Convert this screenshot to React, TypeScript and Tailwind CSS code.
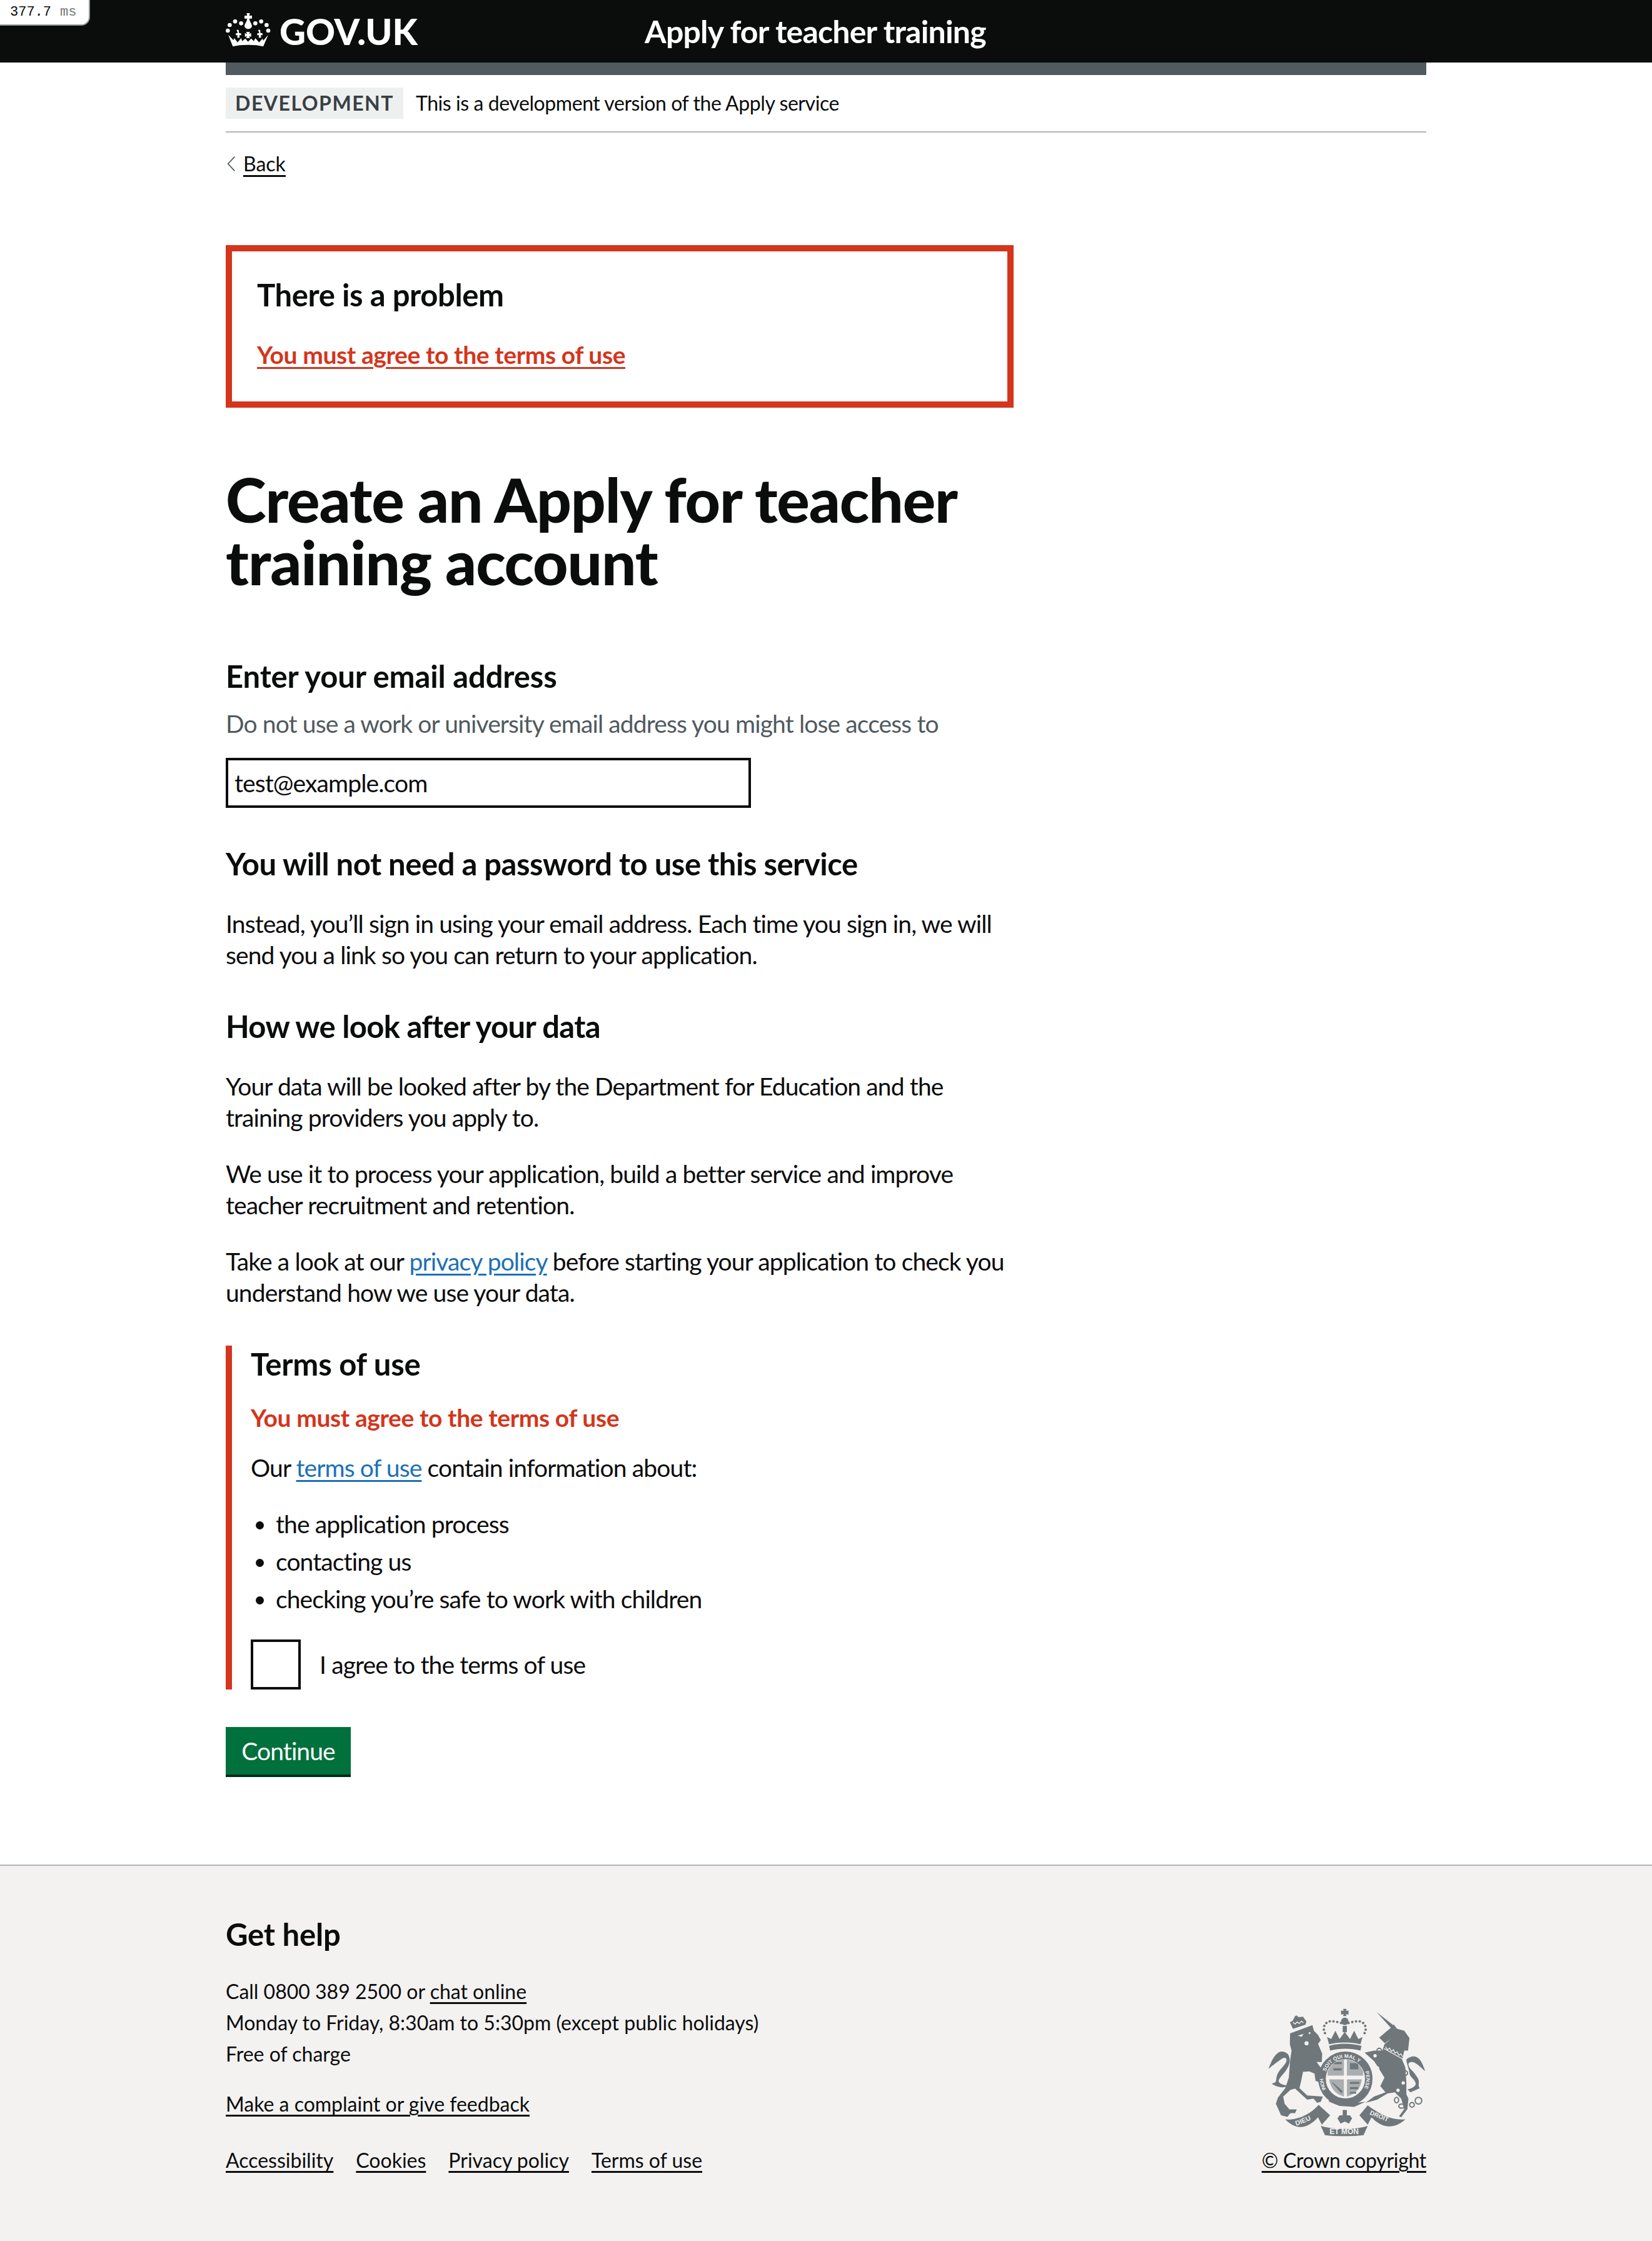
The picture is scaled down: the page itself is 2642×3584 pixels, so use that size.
const fontStack = "font-['Lato',sans-serif]";
const bold = "pb-[2px] text-[49px] font-bold leading-[58px]";

function CrownLogo() {
  return (
    <svg viewBox="0 0 270 210" className="ml-[-6px] h-[70px] w-[90px] shrink-0" fill="#ffffff">
      {[[28, 102], [37, 75], [63, 58], [92, 67], [222, 102], [214, 75], [188, 58], [160, 67]].map(([cx, cy]) => (
        <circle key={cx} cx={cx} cy={cy} r="10" />
      ))}
      <path d="M118 18h16l-3 12h13v14h-13l3 12c6 12 12 20 9 28-3 7-11 10-17 10s-14-3-17-10c-3-8 3-16 9-28l3-12h-13V30h13z" />
      <path d="M70 98h10l2 16h9l1 10h-9l2 12h-12l2-12h-9l1-10h9z" />
      <path d="M173 98h10l2 16h9l1 10h-9l2 12h-12l2-12h-9l1-10h9z" />
      <path d="M116 108h18l-4 10 10-4v18l-10-4 4 10h-18l4-10-10 4v-18l10 4z" />
      <path d="M30 122l25 26 4-10 16 20 17-20 5 14 15-12 13 15 15-15 13 12 7-14 18 20 17-18 3 10 24-28-24 56c-38-10-108-10-146 0z" />
    </svg>
  );
}

function RoyalArms() {
  return (
    <svg viewBox="130 85 760 620" className="h-[207px] w-[254px]" fill="#6f777b">
      {/* lion */}
      <path d="M238 208L345 168 352 195 372 215 385 240 372 258 392 305 390 345 365 345 395 385 410 440 385 445 360 435 355 400 330 390 300 392 290 440 283 470 320 505 395 510 385 535 368 540 350 520 320 525 262 472 240 478 205 510 212 545 235 572 270 572 262 590 240 590 225 608 195 600 170 545 180 515 215 470 232 420 238 340 245 290 237 260Z" />
      <path d="M275 218l28-8-10 14zM325 205l12-4-4 12z" fill="#f3f2f1" />
      <circle cx="317" cy="255" r="10" fill="#f3f2f1" />
      <path d="M236 345c3-30-10-50-40-50-22 0-48 40-61 83 15-15 50-40 65-50 14-8 24-2 20 14-5 18-30 35-42 60-6 14-6 30-8 36-3 6-10 8-20 10 15 12 45 22 65 17l12-8c-12 0-50-8-43-26 8-20 45-45 52-86z" />
      <path d="M252 186l-15-31 13-7 12-23 8-3 8 8 22-2 16 22-4 16z" />
      <path d="M252 155l10 8 10-10 10 8 10-12 10 8" fill="none" stroke="#f3f2f1" strokeWidth="4" />
      {/* unicorn */}
      <path d="M652 105L735 170 722 182z" />
      <path d="M725 178L735 165 750 185 785 195 810 230 803 290 785 290 775 335 790 370 795 440 795 500 805 520 800 570 770 610 760 605 785 570 770 520 740 490 705 495 655 525 600 540 640 510 695 490 670 460 690 420 660 370 640 340 595 300 640 290 680 290 690 260 722 232 692 255 665 228 700 198Z" />
      <path d="M688 280L780 332M695 272l10 14 10-8 8 16 10-8 8 16 10-6 8 16 10-6 8 14" fill="none" stroke="#f3f2f1" strokeWidth="4" />
      <path d="M795 332c10-8 25-14 35-14 28 0 42 32 55 70-15-10-40-40-60-43-10-2-20 2-20 10 0 20 25 35 30 45 8 12 20 25 20 40 0 15-5 20 5 30l-45 20-15-15c20 0 40-15 40-25 0-20-30-35-30-50 0-15-15-50-15-68z" />
      <g fill="none" stroke="#6f777b" strokeWidth="6">
        <circle cx="665" cy="290" r="11" />
        <circle cx="790" cy="398" r="11" />
        <ellipse cx="748" cy="527" rx="10" ry="13" />
        <ellipse cx="772" cy="556" rx="13" ry="10" />
        <circle cx="822" cy="550" r="11" />
        <circle cx="853" cy="530" r="16" />
      </g>
      <g fill="#f3f2f1">
        <circle cx="645" cy="315" r="8" />
        <circle cx="655" cy="375" r="10" />
        <circle cx="780" cy="445" r="8" />
        <circle cx="755" cy="480" r="8" />
      </g>
      {/* crown */}
      {[[400, 190], [402, 172], [412, 158], [428, 150], [446, 150], [464, 153], [482, 158], [518, 158], [536, 153], [554, 150], [572, 150], [588, 158], [598, 172], [600, 190], [405, 206], [595, 206]].map(([cx, cy]) => (
        <circle key={`${cx}-${cy}`} cx={cx} cy={cy} r="6" />
      ))}
      <path d="M492 90h16l-2 10 12-2v20l-12-3 2 10h-16l2-10-12 3V98l12 2z" />
      <circle cx="500" cy="150" r="18" />
      <path d="M490 172h20v30h-20z" />
      <path d="M415 225l20 10 20-40 20 40 25-35 25 35 20-40 20 40 20-10-10 35c-40-12-110-12-150 0z" />
      <path d="M425 268c40-14 110-14 155 0l-5 22c-45-12-100-12-145 0z" />
      {/* garter */}
      <circle cx="503" cy="425" r="112" fill="none" stroke="#6f777b" strokeWidth="36" />
      <defs>
        <path id="garter-top" d="M409 391A100 100 0 0 1 590 375" />
        <path id="garter-right" d="M597 391A100 100 0 0 1 553 512" />
        <path id="garter-left" d="M381 425A122 122 0 0 0 437 528" />
        <clipPath id="shield-clip">
          <circle cx="503" cy="425" r="92" />
        </clipPath>
      </defs>
      <g fill="#f3f2f1" fontFamily="Liberation Sans, sans-serif" fontWeight="700">
        <text fontSize="25"><textPath href="#garter-top">SOIT QUI MAL Y</textPath></text>
        <text fontSize="24"><textPath href="#garter-right">PENSE</textPath></text>
        <text fontSize="24"><textPath href="#garter-left">HONI</textPath></text>
      </g>
      {/* shield */}
      <g clipPath="url(#shield-clip)">
        <path d="M418 322h78v88h-78zM510 322h78v88h-78zM425 428h71v82c-40-10-65-40-71-82zM510 428h72c-5 42-30 72-72 82z" fill="#6f777b" opacity="0.55" />
        <path d="M435 345h50v10h-50zM445 375h40v10h-40zM525 350h40v30h-40zM525 440h45v10h-45zM525 465h40v10h-40zM525 488h30v8h-30zM440 440l50 45-6 10-44-50z" />
      </g>
      <path d="M420 510l15-5 30 25 60 15 75-10-55 25-70-5-50-20z" />
      {/* motto scroll */}
      <path d="M215 620C280 625 340 590 375 550L430 600 390 645 372 610C320 665 270 675 215 620z" />
      <path d="M790 620C720 625 660 590 610 552L570 600 610 645 628 610C670 655 730 675 790 620z" />
      <path d="M385 650c60 20 170 20 225 0l-20 45c-60 6-130 6-185 0z" />
      <path d="M490 575h20v25l15 0 10 15-15 25-20-10-20 10-15-25 10-15 15 0z" />
      <g fill="#f3f2f1" fontFamily="Liberation Sans, sans-serif" fontWeight="700">
        <text x="268" y="650" fontSize="32" transform="rotate(-22 268 650)">DIEU</text>
        <text x="497" y="690" textAnchor="middle" fontSize="36">ET MON</text>
        <text x="618" y="596" fontSize="30" transform="rotate(22 618 596)">DROIT</text>
      </g>
    </svg>
  );
}

export default function App() {
  return (
    <div className={`relative flex min-h-[3584px] flex-col bg-white text-[39px] leading-[50px] tracking-[-0.88px] text-[#0b0c0c] ${fontStack}`}>
      {/* profiler badge */}
      <div className="absolute left-0 top-0 flex h-[41px] w-[144px] items-center rounded-br-[14px] border-b-2 border-r-2 border-[#999999] bg-white pl-[16px] font-['Liberation_Mono',monospace] text-[22px] leading-none tracking-normal">
        377.7 <span className="ml-[14px] text-[#777777]">ms</span>
      </div>

      <header className="h-[100px] bg-[#0b0c0c]">
        <div className="mx-auto flex w-[1920px] items-center text-white">
          <div className="flex h-[100px] w-[670px] items-center gap-[2px]">
            <CrownLogo />
            <span className="text-[58px] font-black leading-none tracking-normal">GOV.UK</span>
          </div>
          <span className="text-[50px] font-bold leading-none tracking-[-0.8px]">Apply for teacher training</span>
        </div>
      </header>

      <main className="mx-auto w-[1920px]">
        <div className="h-[20px] bg-[#505a5f]" />
        <div className="flex items-center gap-[20px] border-b-2 border-[#b1b4b6] pb-[20px] pt-[20px]">
          <strong className="w-[284px] bg-[#eef0f0] py-[5px] text-center text-[32px] font-bold leading-[40px] tracking-[1.5px] text-[#383f43]">DEVELOPMENT</strong>
          <span className="text-[32px] leading-[40px] tracking-[-0.43px]">This is a development version of the Apply service</span>
        </div>

        <a className="mt-[30px] flex items-center gap-[12px] text-[32px] leading-[40px] tracking-normal">
          <svg viewBox="0 0 16 28" className="ml-[2px] h-[28px] w-[14px]" fill="none" stroke="#505a5f" strokeWidth="2">
            <path d="M14 1 2 14l12 13" />
          </svg>
          <span className="underline underline-offset-[6px]">Back</span>
        </a>

        <div className="mt-[110px] w-[1260px] border-[10px] border-[#d4351c] px-[40px] pb-[50px] pt-[40px]">
          <h2 className={`${bold} tracking-[-0.4px]`}>There is a problem</h2>
          <a className="mt-[40px] block font-bold tracking-[-0.4px] text-[#d4351c] underline underline-offset-[5px]">You must agree to the terms of use</a>
        </div>

        <h1 className="mt-[96px] w-[1260px] text-[98px] font-black leading-[100px] tracking-[-1.1px]">Create an Apply for teacher training account</h1>

        <div className="w-[1260px]">
          <label className={`mt-[104px] block ${bold} tracking-[-0.14px]`}>Enter your email address</label>
          <p className="mt-[20px] text-[#505a5f]">Do not use a work or university email address you might lose access to</p>
          <div className="mt-[30px] flex h-[80px] w-[840px] items-center border-4 border-[#0b0c0c] px-[10px]">test@example.com</div>

          <h2 className={`mt-[60px] ${bold} tracking-[-0.48px]`}>You will not need a password to use this service</h2>
          <p className="mt-[40px]">Instead, you’ll sign in using your email address. Each time you sign in, we will send you a link so you can return to your application.</p>

          <h2 className={`mt-[60px] ${bold} tracking-[-0.67px]`}>How we look after your data</h2>
          <p className="mt-[40px]">Your data will be looked after by the Department for Education and the training providers you apply to.</p>
          <p className="mt-[40px]">We use it to process your application, build a better service and improve teacher recruitment and retention.</p>
          <p className="mt-[40px]">
            Take a look at our <a className="text-[#1d70b8] underline underline-offset-[5px]">privacy policy</a> before starting your application to check you understand how we use your data.
          </p>

          <section className="mt-[60px] border-l-[10px] border-[#d4351c] pl-[30px]">
            <h2 className={`${bold} tracking-[-0.2px]`}>Terms of use</h2>
            <p className="mt-[30px] font-bold tracking-[-0.4px] text-[#d4351c]">You must agree to the terms of use</p>
            <p className="mt-[30px]">
              Our <a className="text-[#1d70b8] underline underline-offset-[5px]">terms of use</a> contain information about:
            </p>
            <ul className="mt-[40px] flex list-disc flex-col gap-[10px] pl-[40px]">
              <li>the application process</li>
              <li>contacting us</li>
              <li>checking you’re safe to work with children</li>
            </ul>
            <div className="mt-[40px] flex items-center gap-[30px]">
              <div className="h-[80px] w-[80px] border-4 border-[#0b0c0c]" />
              <span>I agree to the terms of use</span>
            </div>
          </section>

          <button className="mt-[60px] flex h-[80px] w-[200px] items-center justify-center border-b-4 border-[#002d18] bg-[#00703c] text-white">Continue</button>
        </div>
      </main>

      <footer className="mt-[140px] flex-1 border-t-2 border-[#b1b4b6] bg-[#f3f2f1] pt-[80px] tracking-normal">
        <div className="mx-auto w-[1920px] text-[32px] leading-[50px]">
          <h2 className={`${bold} tracking-[-0.2px]`}>Get help</h2>
          <div className="flex items-end justify-between">
            <div>
              <p className="mt-[36px]">Call 0800 389 2500 or <a className="underline underline-offset-[5px]">chat online</a></p>
              <p>Monday to Friday, 8:30am to 5:30pm (except public holidays)</p>
              <p>Free of charge</p>
              <a className="mt-[30px] block underline underline-offset-[5px]">Make a complaint or give feedback</a>
              <div className="mt-[40px] flex gap-[36px]">
                <a className="underline underline-offset-[5px]">Accessibility</a>
                <a className="underline underline-offset-[5px]">Cookies</a>
                <a className="underline underline-offset-[5px]">Privacy policy</a>
                <a className="underline underline-offset-[5px]">Terms of use</a>
              </div>
            </div>
            <div className="flex flex-col items-end gap-[12px]">
              <RoyalArms />
              <a className="tracking-[-0.3px] underline underline-offset-[5px]">© Crown copyright</a>
            </div>
          </div>
        </div>
      </footer>
    </div>
  );
}
